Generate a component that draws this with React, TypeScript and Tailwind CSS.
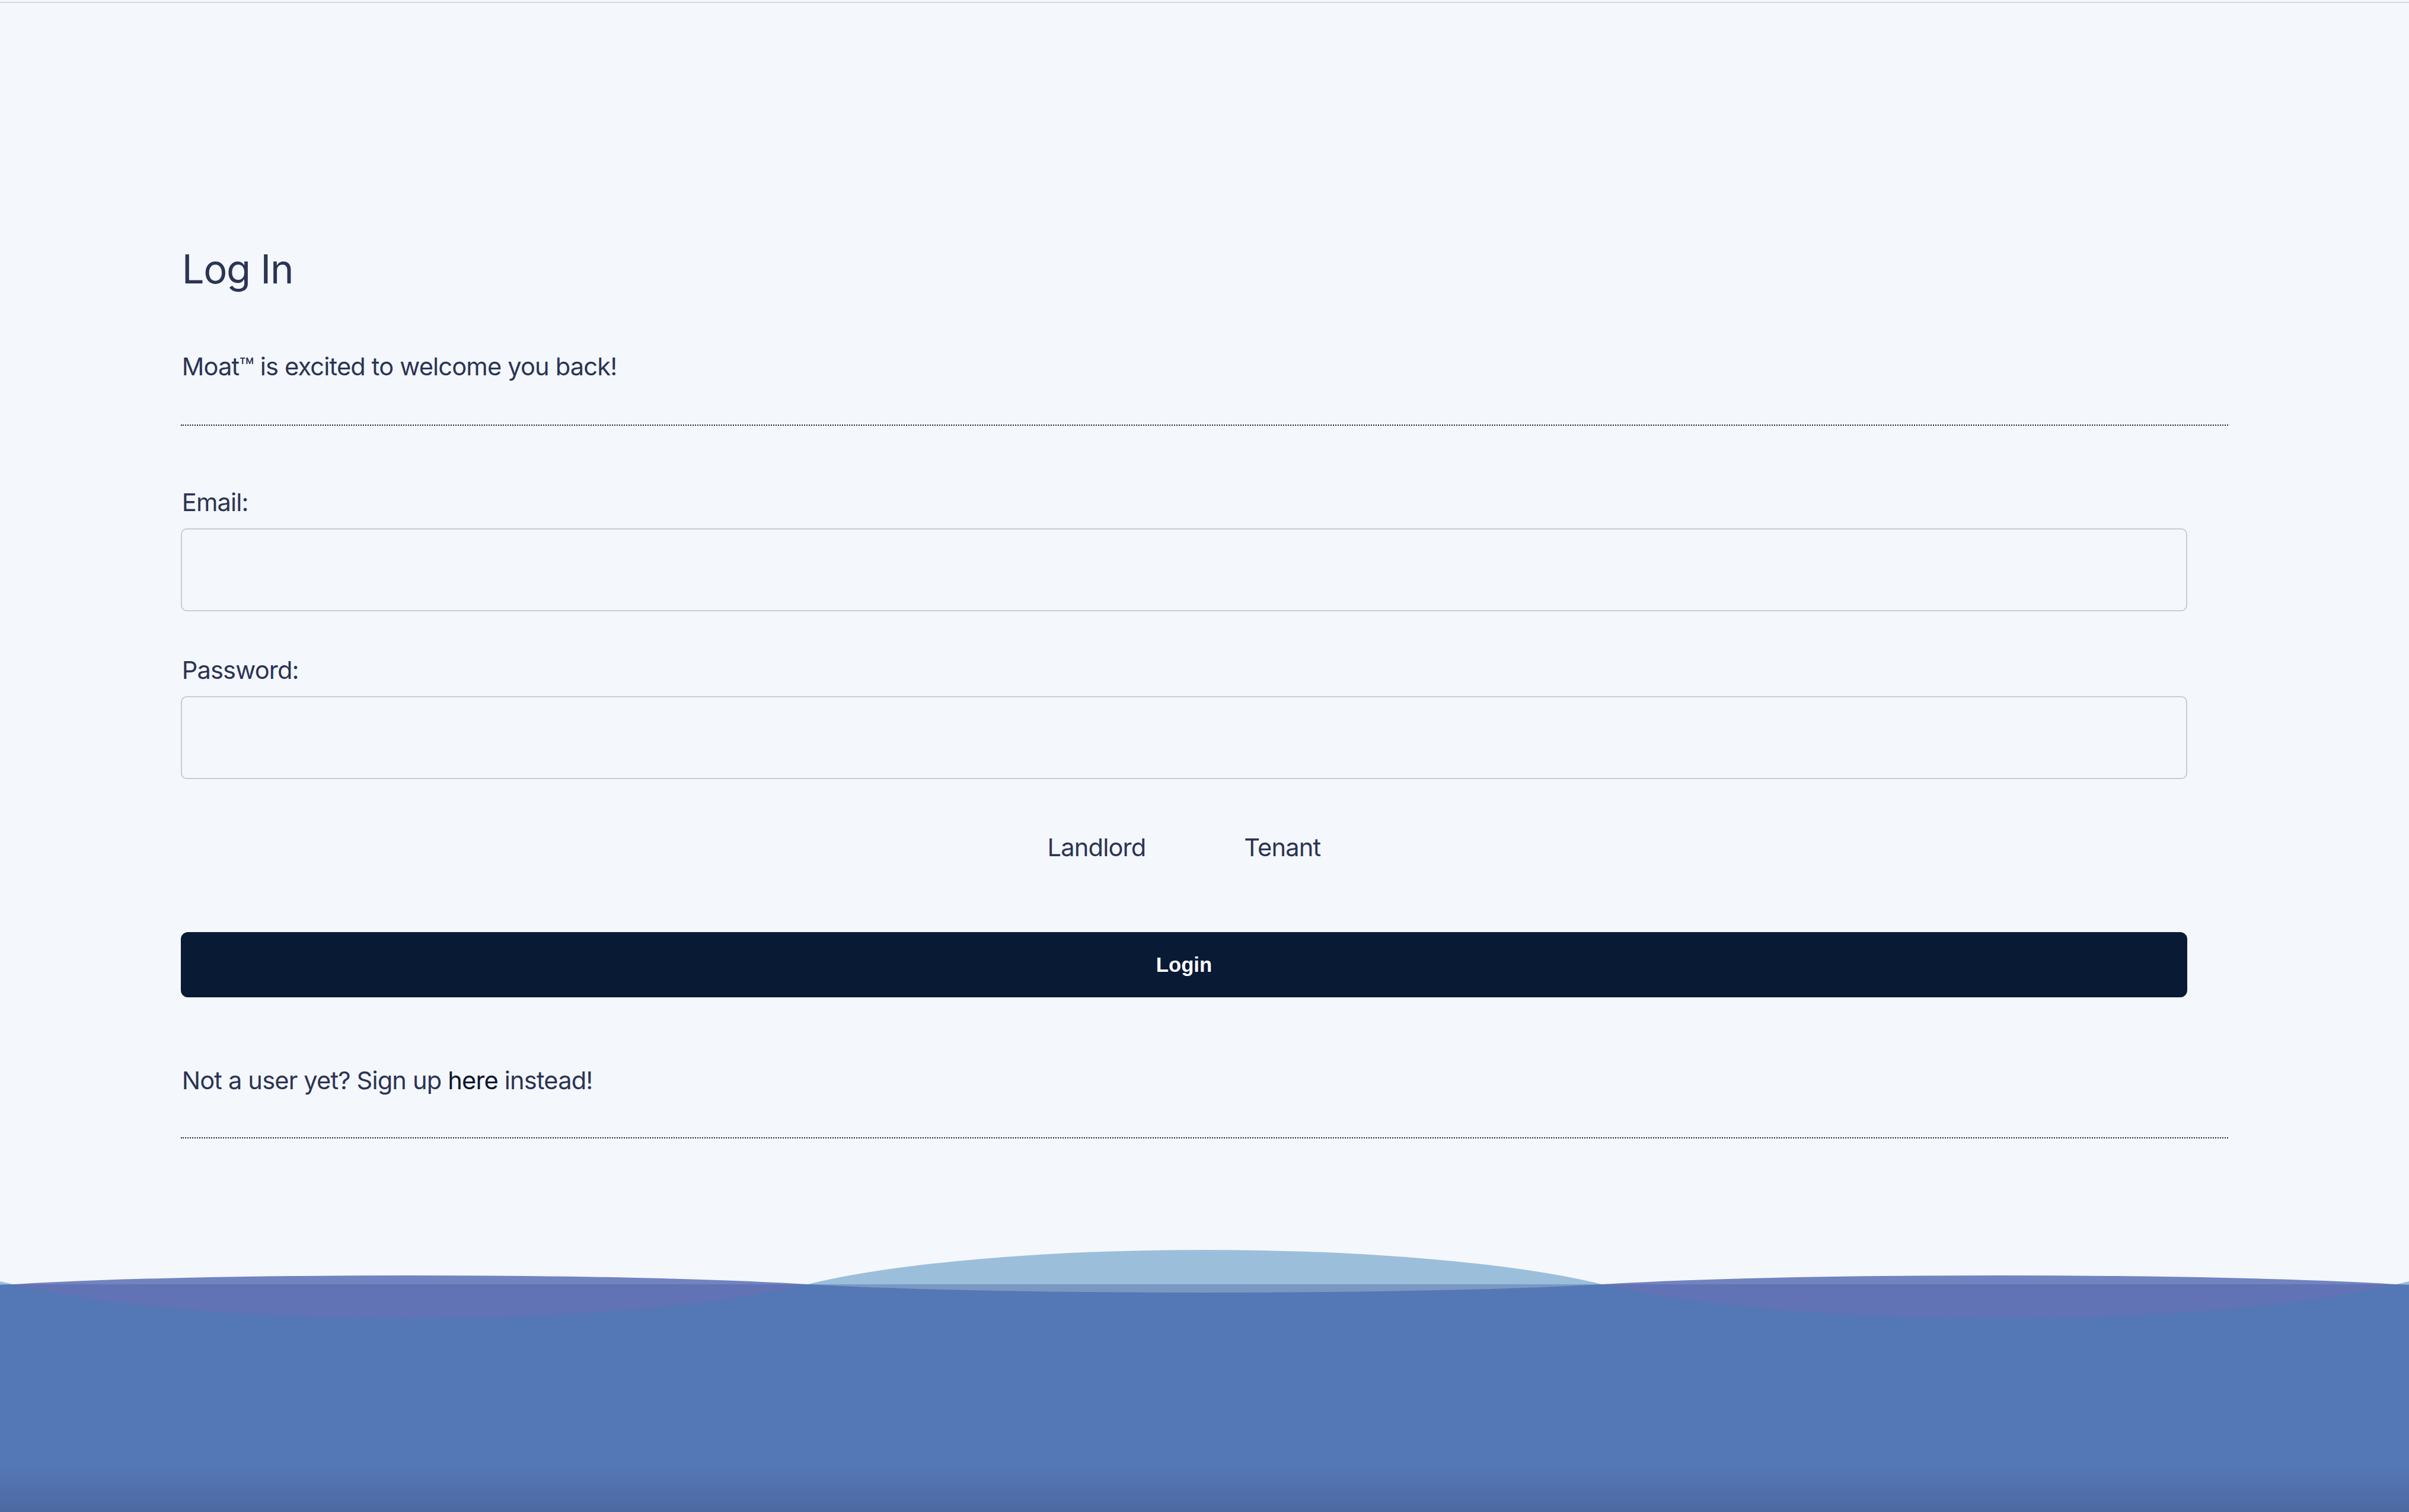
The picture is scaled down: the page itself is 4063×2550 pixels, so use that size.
import React from "react";

function Waves() {
  return (
    <svg
      className="block w-full h-[450px] shrink-0"
      viewBox="0 0 4063 450"
      preserveAspectRatio="none"
    >
      <defs>
        <linearGradient id="seaShade" x1="0" y1="0" x2="0" y2="1">
          <stop offset="0" stopColor="#5477b5" />
          <stop offset="0.8" stopColor="#5477b5" />
          <stop offset="1" stopColor="#4d69a2" />
        </linearGradient>
      </defs>
      <rect x="0" y="66" width="4063" height="384" fill="url(#seaShade)" />
      {/* light blue domes */}
      <path d="M-1318,66 A800,128 0 0 1 22,66 Z" fill="#9bbedb" />
      <path d="M-1318,66 A800,31 0 0 0 22,66 Z" fill="#7a98c2" />
      <path d="M1362,66 A800,128 0 0 1 2702,66 Z" fill="#9bbedb" />
      <path d="M1362,66 A800,31 0 0 0 2702,66 Z" fill="#7a98c2" />
      <path d="M4042,66 A800,128 0 0 1 5382,66 Z" fill="#9bbedb" />
      <path d="M4042,66 A800,31 0 0 0 5382,66 Z" fill="#7a98c2" />
      {/* purple lenses */}
      <path d="M22,66 A800,33 0 0 1 1362,66 Z" fill="#7183c0" />
      <path d="M22,66 A800,126 0 0 0 1362,66 Z" fill="#6173b5" />
      <path d="M2702,66 A800,33 0 0 1 4042,66 Z" fill="#7183c0" />
      <path d="M2702,66 A800,126 0 0 0 4042,66 Z" fill="#6173b5" />
    </svg>
  );
}

export default function App() {
  return (
    <div className="min-h-screen bg-[#f4f7fc] flex flex-col font-['Inter',sans-serif] text-[#2b3454] overflow-hidden">
      <div className="mt-[3px] h-[2px] bg-[#d9d9d9] shrink-0" />
      <div className="mx-auto w-[85%]">
        <div className="border-b-[2.6px] border-dotted border-[#222222] pb-[67px]">
          <h1 className="mt-[409px] ml-[2px] text-[67px] leading-[80px] font-normal tracking-[-0.02em]">
            Log In
          </h1>
          <p className="mt-[93px] ml-[2px] text-[41.6px] leading-[62px] tracking-[-0.02em]">
            Moat™ is excited to welcome you back!
          </p>
        </div>
        <form className="border-b-[2.6px] border-dotted border-[#222222] pb-[65px]">
          <label className="block mt-[98px] ml-[2px] text-[41.6px] leading-[62px] tracking-[-0.02em]">
            Email:
          </label>
          <input
            type="email"
            className="block mt-[13px] w-[98%] h-[140px] rounded-[10px] border-[2.6px] border-[#cccccc] bg-[#f4f7fc] outline-none"
          />
          <label className="block mt-[68px] ml-[2px] text-[41.6px] leading-[62px] tracking-[-0.02em]">
            Password:
          </label>
          <input
            type="password"
            className="block mt-[13px] w-[98%] h-[140px] rounded-[10px] border-[2.6px] border-[#cccccc] bg-[#f4f7fc] outline-none"
          />
          <div className="mt-[84px] w-[98%] flex justify-center gap-[166px] text-[41.6px] leading-[62px] tracking-[-0.02em]">
            <span>Landlord</span>
            <span>Tenant</span>
          </div>
          <button
            type="button"
            className="block mt-[112px] w-[98%] h-[110px] rounded-[12px] bg-[#091a35] text-white font-['Liberation_Sans',Arial,sans-serif] font-bold text-[34.7px]"
          >
            Login
          </button>
          <p className="mt-[109px] ml-[2px] text-[41.6px] leading-[62px] tracking-[-0.02em]">
            Not a user yet? Sign up <span className="text-[#0b1530]">here</span> instead!
          </p>
        </form>
      </div>
      <div className="flex-1" />
      <Waves />
    </div>
  );
}
